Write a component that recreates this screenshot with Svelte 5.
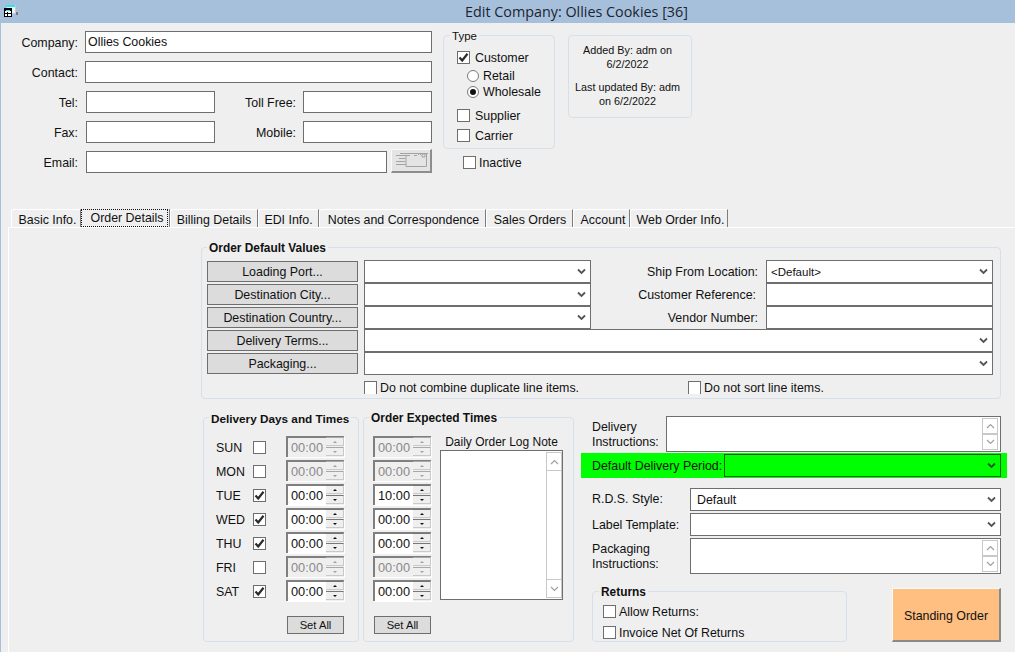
<script>
  const tabs = [
    ['Basic Info.', 70, 3], ['Order Details', 89, 0], ['Billing Details', 88, 0], ['EDI Info.', 61, 0],
    ['Notes and Correspondence', 167, 2], ['Sales Orders', 87, 1], ['Account', 57, 3], ['Web Order Info.', 98, 3]
  ];
  const days = [
    ['SUN', false, '00:00', false, '00:00', false],
    ['MON', false, '00:00', false, '00:00', false],
    ['TUE', true, '00:00', true, '10:00', true],
    ['WED', true, '00:00', true, '00:00', true],
    ['THU', true, '00:00', true, '00:00', true],
    ['FRI', false, '00:00', false, '00:00', false],
    ['SAT', true, '00:00', true, '00:00', true]
  ];
  const lookups = ['Loading Port...', 'Destination City...', 'Destination Country...', 'Delivery Terms...', 'Packaging...'];
</script>

{#snippet check(on)}
  <span class="check">
    {#if on}
      <svg width="11" height="11" viewBox="0 0 11 11"><path d="M1.5 5.5 L4.2 8.5 L9.5 1.8" fill="none" stroke="#2b2b2b" stroke-width="2.2"/></svg>
    {/if}
  </span>
{/snippet}

{#snippet chev()}
  <svg class="chev" width="9" height="7" viewBox="0 0 9 7"><path d="M1 1.5 L4.5 5 L8 1.5" fill="none" stroke="#555" stroke-width="1.8"/></svg>
{/snippet}

{#snippet spin(value, on)}
  <div class="spin" class:off={!on}>
    <span class="time">{value}</span>
    <div class="spin-btns">
      <span class="spin-btn"><i class="up"></i></span>
      <span class="spin-btn"><i class="down"></i></span>
    </div>
  </div>
{/snippet}

{#snippet memoBar()}
  <div class="memo-bar">
    <span class="memo-arrow"><svg width="9" height="6" viewBox="0 0 9 6"><path d="M1 5 L4.5 1.5 L8 5" fill="none" stroke="#a0a0a0" stroke-width="1.2"/></svg></span>
    <span class="memo-arrow"><svg width="9" height="6" viewBox="0 0 9 6"><path d="M1 1 L4.5 4.5 L8 1" fill="none" stroke="#a0a0a0" stroke-width="1.2"/></svg></span>
  </div>
{/snippet}

<div class="app">
  <header class="title">
    <svg class="win-icon" width="15" height="13" viewBox="0 0 15 13">
      <rect x="2.5" y="0.5" width="9" height="8" fill="#eaf2f6" stroke="#c3ced6" stroke-width="1"/>
      <rect x="2" y="0" width="9" height="2" fill="#2fe6ee"/>
      <rect x="12" y="7" width="2" height="3" fill="#7a7a7a"/>
      <rect x="0.5" y="3.5" width="7" height="8" fill="#fff" stroke="#000" stroke-width="1"/>
      <rect x="1" y="4" width="6" height="2" fill="#000"/>
      <rect x="2" y="5" width="4" height="1" fill="#2fe6ee"/>
      <path d="M1 8.5H7M3.5 7V11" stroke="#000" stroke-width="1"/>
    </svg>
    <span>Edit Company: Ollies Cookies [36]</span>
  </header>

  <div class="top">
    <div class="contact">
      <div class="row"><label class="l-main" for="co">Company:</label><input id="co" class="box co-in" value="Ollies Cookies" /></div>
      <div class="row"><span class="l-main">Contact:</span><div class="box co-in"></div></div>
      <div class="row"><span class="l-main l-short">Tel:</span><div class="box phone"></div><span class="l-second">Toll Free:</span><div class="box phone"></div></div>
      <div class="row"><span class="l-main l-short">Fax:</span><div class="box phone"></div><span class="l-second">Mobile:</span><div class="box phone"></div></div>
      <div class="row email-row"><span class="l-main l-short">Email:</span><div class="box email"></div>
        <div class="env-btn">
          <svg width="33" height="19" viewBox="0 0 33 19" fill="none" stroke="#a3a3a3" stroke-width="1">
            <path d="M5 2.5H33M31.5 2.5V15.5H11M11 5V15.5"/>
            <path d="M1 4.5H15M19 4.5H22M4 7.5H10M1 10.5H10M1 13.5H11"/>
            <path d="M25 3.5H26M27 3.5H28M29 3V6H32V3Z" transform="translate(-2 0)"/>
          </svg>
        </div>
      </div>
    </div>

    <div class="type-col">
      <fieldset class="group type">
        <legend>Type</legend>
        <div class="opt customer">{@render check(true)}<span>Customer</span></div>
        <div class="opt sub retail"><span class="radio"></span><span>Retail</span></div>
        <div class="opt sub wholesale"><span class="radio on"></span><span>Wholesale</span></div>
        <div class="opt supplier">{@render check(false)}<span>Supplier</span></div>
        <div class="opt carrier">{@render check(false)}<span>Carrier</span></div>
      </fieldset>
      <div class="opt inactive">{@render check(false)}<span>Inactive</span></div>
    </div>

    <div class="audit">
      <p>Added By: adm on<br />6/2/2022</p>
      <p>Last updated By: adm<br />on 6/2/2022</p>
    </div>
  </div>

  <nav class="tabs">
    {#each tabs as [name, w, pad], i}
      <div class="tab" class:active={i === 1} style="width:{w}px;padding-left:{pad}px"><span>{name}</span></div>
    {/each}
  </nav>

  <section class="panel">
    <fieldset class="group bold defaults">
      <legend>Order Default Values</legend>
      <div class="def-grid">
        {#each lookups as b, i}
          <div class="look" style="grid-row:{i + 1}"><span>{b}</span></div>
        {/each}
        <div class="box sel r1">{@render chev()}</div>
        <div class="box sel r2">{@render chev()}</div>
        <div class="box sel r3">{@render chev()}</div>
        <span class="def-label r1c">Ship From Location:</span>
        <span class="def-label r2c">Customer Reference:</span>
        <span class="def-label r3c">Vendor Number:</span>
        <div class="box sel r1d"><span>&lt;Default&gt;</span>{@render chev()}</div>
        <div class="box r2d"></div>
        <div class="box r3d"></div>
        <div class="box sel r4w">{@render chev()}</div>
        <div class="box sel r5w">{@render chev()}</div>
      </div>
      <div class="def-checks">
        <div class="clip first">{@render check(false)}<span>Do not combine duplicate line items.</span></div>
        <div class="clip">{@render check(false)}<span>Do not sort line items.</span></div>
      </div>
    </fieldset>

    <div class="lower">
      <fieldset class="group bold days">
        <legend>Delivery Days and Times</legend>
        <div class="stack">
          {#each days as d}
            <div class="day">
              <span class="day-name">{d[0]}</span>
              {@render check(d[1])}
              {@render spin(d[2], d[3])}
            </div>
          {/each}
        </div>
        <div class="set-all days-set">Set All</div>
      </fieldset>

      <fieldset class="group bold expected">
        <legend>Order Expected Times</legend>
        <div class="exp-body">
          <div>
            <div class="stack">
              {#each days as d}
                {@render spin(d[4], d[5])}
              {/each}
            </div>
            <div class="set-all exp-set">Set All</div>
          </div>
          <div class="note">
            <span class="note-label">Daily Order Log Note</span>
            <div class="box note-box">
              <div class="note-bar">
                <span><svg width="9" height="6" viewBox="0 0 9 6"><path d="M1 5 L4.5 1.5 L8 5" fill="none" stroke="#a0a0a0" stroke-width="1.2"/></svg></span>
                <span class="note-track"></span>
                <span><svg width="9" height="6" viewBox="0 0 9 6"><path d="M1 1 L4.5 4.5 L8 1" fill="none" stroke="#a0a0a0" stroke-width="1.2"/></svg></span>
              </div>
            </div>
          </div>
        </div>
      </fieldset>

      <div class="side">
        <div class="s-row">
          <span class="s-label di">Delivery<br />Instructions:</span>
          <div class="box memo di-box">{@render memoBar()}</div>
        </div>
        <div class="green">
          <span class="g-label">Default Delivery Period:</span>
          <div class="box sel g-sel">{@render chev()}</div>
        </div>
        <div class="s-row rds">
          <span class="s-label wide">R.D.S. Style:</span>
          <div class="box sel wide-in"><span>Default</span>{@render chev()}</div>
        </div>
        <div class="s-row next">
          <span class="s-label wide">Label Template:</span>
          <div class="box sel wide-in">{@render chev()}</div>
        </div>
        <div class="s-row next">
          <span class="s-label wide">Packaging<br />Instructions:</span>
          <div class="box memo wide-in">{@render memoBar()}</div>
        </div>
        <div class="foot">
          <fieldset class="group bold returns">
            <legend>Returns</legend>
            <div class="opt ret1">{@render check(false)}<span>Allow Returns:</span></div>
            <div class="opt ret2">{@render check(false)}<span>Invoice Net Of Returns</span></div>
          </fieldset>
          <div class="standing">Standing Order</div>
        </div>
      </div>
    </div>
  </section>
</div>

<style>
  :global(body) { margin: 0; background: #efefef; overflow: hidden; }
  .app {
    width: 1015px; height: 652px; box-sizing: border-box; overflow: hidden;
    background: #efefef; border-left: 1px solid #a6c0dc;
    font: 12.4px/14px "Liberation Sans", Arial, sans-serif; color: #111;
  }
  .title {
    height: 23px; margin-left: -1px; background: #a6c0dc; display: flex; align-items: center;
    justify-content: center; padding-left: 138px; position: relative;
    font: 14.35px/23px "Open Sans", sans-serif; color: #1c2430;
  }
  .win-icon { position: absolute; left: 4px; top: 5px; }

  .box { box-sizing: border-box; background: #fff; border: 1px solid #6e6e6e; flex: none; }
  input.box { font: inherit; color: #111; padding: 0 2px 1px 2px; margin: 0; outline: none; border-radius: 0; }

  .top { height: 186px; box-sizing: border-box; padding-top: 6px; display: flex; align-items: flex-start; }
  .contact { width: 431px; padding-top: 2px; flex: none; }
  .row { display: flex; align-items: center; height: 22px; margin-bottom: 8px; }
  .l-main { width: 77px; text-align: right; flex: none; margin-right: 7px; padding-top: 2px; }
  .l-short { margin-right: 8px; }
  .l-second { width: 81px; text-align: right; margin-right: 7px; flex: none; padding-top: 2px; }
  .co-in { width: 347px; height: 22px; }
  .phone { width: 129px; height: 22px; }
  .email { width: 301px; height: 22px; }
  .email-row { height: 24px; align-items: flex-end; margin-top: -2px; }
  .email-row .l-main { padding-top: 0; margin-bottom: 3px; }
  .env-btn {
    width: 41px; height: 24px; margin-left: 4px; box-sizing: border-box; flex: none;
    background: #e4e4e4; border: 1px solid #fafafa; border-right: 2px solid #8d8d8d; border-bottom: 2px solid #8d8d8d;
    display: flex; align-items: center; justify-content: center;
  }
  .env-btn svg { display: block; }

  .group { margin: 0; padding: 0; min-width: 0; box-sizing: border-box; border: 1px solid #d6e0ea; border-radius: 4px; }
  .group legend { padding: 0 2px; line-height: 13px; height: 13px; white-space: nowrap; }
  .bold legend { font-weight: bold; font-size: 11.9px; line-height: 15px; }

  .check {
    width: 13px; height: 13px; box-sizing: border-box; flex: none; background: #fff;
    border: 1px solid #6e6e6e; display: inline-flex; align-items: center; justify-content: center;
  }
  .check svg { display: block; }
  .radio {
    width: 12px; height: 12px; box-sizing: border-box; flex: none; background: #fff; border-radius: 50%;
    border: 1px solid #7a7a7a; display: inline-flex; align-items: center; justify-content: center;
  }
  .radio.on::after { content: ""; width: 6px; height: 6px; border-radius: 50%; background: #111; }
  .opt { display: flex; align-items: center; gap: 5px; height: 13px; }

  .type-col { margin-left: 11px; width: 112px; flex: none; }
  .type { width: 112px; height: 120px; padding-left: 13px; }
  .type legend { margin-left: -7px; font-size: 11.5px; line-height: 15px; }
  .customer { margin-top: 9px; }
  .sub { padding-left: 10px; gap: 4px; }
  .retail { margin-top: 5px; }
  .wholesale { margin-top: 3px; }
  .supplier { margin-top: 11px; }
  .carrier { margin-top: 7px; }
  .inactive { margin: 7px 0 0 20px; gap: 3px; }

  .audit {
    margin: 6px 0 0 13px; width: 124px; height: 83px; box-sizing: border-box; flex: none;
    border: 1px solid #d6e0ea; border-radius: 4px; text-align: center; font-size: 10.8px; padding: 7px 5px 0 0;
    line-height: 14px;
  }
  .audit p { margin: 0 0 9px; }

  .tabs { display: flex; height: 18px; padding-left: 10px; }
  .tab {
    box-sizing: border-box; flex: none; height: 18px; border-top: 1px solid #fff; border-left: 1px solid #fff;
    border-right: 1px solid #7c7c7c; border-top-left-radius: 3px;
    display: flex; align-items: center; justify-content: center; padding-top: 2px; white-space: nowrap;
  }
  .tab.active { padding: 0; border: none; border-right: 1px solid #7c7c7c; justify-content: flex-start; }
  .tab.active span {
    outline: 1px dotted #111; outline-offset: -1px; width: 87px; height: 18px; line-height: 18px; text-align: center;
    display: block; padding-left: 5px; box-sizing: border-box;
  }

  .panel { margin-left: 7px; height: 425px; box-sizing: border-box; border-top: 1px solid #fff; border-left: 1px solid #fff; padding-top: 13px; }

  .defaults { margin-left: 192px; width: 800px; height: 158px; padding: 6px 0 0 5px; }
  .def-grid {
    display: grid; grid-template-columns: 157px 227px 175px 227px; grid-auto-rows: 23px;
  }
  .look {
    grid-column: 1; width: 151px; height: 21px; margin-top: 1px; box-sizing: border-box; background: #dcdcdc;
    border: 1px solid #6e6e6e; display: flex; align-items: center; justify-content: center;
  }
  .sel { display: flex; align-items: center; justify-content: space-between; padding: 0 4px 0 6px; position: relative; }
  .chev { margin-left: auto; flex: none; }
  .r1 { grid-area: 1 / 2; } .r2 { grid-area: 2 / 2; } .r3 { grid-area: 3 / 2; }
  .def-label { text-align: right; padding: 5px 8px 0 0; }
  .r1c { grid-area: 1 / 3; } .r2c { grid-area: 2 / 3; padding-right: 10px; } .r3c { grid-area: 3 / 3; }
  .r1d { grid-area: 1 / 4; padding-left: 4px; font-size: 11.5px; } .r2d { grid-area: 2 / 4; } .r3d { grid-area: 3 / 4; }
  .r4w { grid-area: 4 / 2 / 4 / 5; } .r5w { grid-area: 5 / 2 / 5 / 5; }

  .def-checks { display: flex; margin: 6px 0 0 157px; }
  .clip { display: flex; gap: 3px; height: 13px; overflow: hidden; align-items: flex-start; }
  .clip .check { border-bottom: none; }
  .clip span:last-child { line-height: 13px; padding-top: 1px; }
  .first { width: 324px; }

  .lower { display: flex; align-items: flex-start; }
  .days { margin: 12px 0 0 194px; width: 156px; height: 231px; padding: 12px 0 0 12px; flex: none; }
  .days legend { margin-left: -7px; padding: 0 2px; font-size: 11.75px; }
  .stack { display: flex; flex-direction: column; gap: 3px; }
  .day { display: flex; align-items: center; height: 21px; }
  .day-name { width: 37px; flex: none; margin-top: 2px; }
  .day .check { margin: 2px 20px 0 0; }
  .spin {
    width: 58px; height: 21px; box-sizing: border-box; flex: none; display: flex; background: #fff;
    border-top: 2px solid #7f7f7f; border-left: 2px solid #7f7f7f; box-shadow: 1px 1px 0 #fff;
  }
  .spin.off { background: #efefef; }
  .spin.off .time { color: #8a8a8a; }
  .time { width: 38px; padding-left: 3px; box-sizing: border-box; line-height: 19px; font-size: 12.8px; flex: none; }
  .spin-btns { display: flex; flex-direction: column; margin-top: -1px; width: 18px; background: #efefef; }
  .spin-btn {
    height: 9px; box-sizing: border-box; border-top: 1px solid #777; background: #efefef;
    border-right: 1px solid #c9c9c9; border-bottom: 1px solid #c9c9c9; margin-bottom: 1px;
    display: flex; align-items: center; justify-content: center;
  }
  .spin-btn i { width: 0; height: 0; border-left: 2px solid transparent; border-right: 2px solid transparent; }
  .spin-btn .up { border-bottom: 2px solid #111; }
  .spin-btn .down { border-top: 2px solid #111; }
  .off .spin-btn { border-top-color: #a8a8a8; }
  .off .spin-btn .up { border-bottom-color: #a0a0a0; }
  .off .spin-btn .down { border-top-color: #a0a0a0; }
  .set-all {
    width: 57px; height: 18px; box-sizing: border-box; margin-top: 15px; background: #dcdcdc; border: 1px solid #6e6e6e;
    text-align: center; line-height: 16px; font-size: 11.2px;
  }
  .days-set { margin-left: 71px; }
  .exp-set { margin-left: 1px; }

  .expected { margin: 12px 0 0 4px; width: 211px; height: 231px; padding: 12px 0 0 9px; flex: none; }
  .expected legend { margin-left: -4px; padding: 0 2px; }
  .exp-body { display: flex; gap: 9px; }
  .note { width: 123px; }
  .note-label { display: block; height: 14px; text-align: center; font-size: 12px; white-space: nowrap; margin-top: -1px; margin-bottom: 1px; }
  .note-box { width: 123px; height: 150px; padding: 1px 1px 1px 105px; }
  .note-bar { width: 16px; height: 146px; display: flex; flex-direction: column; border: 1px solid #c8c8c8; box-sizing: border-box; }
  .note-bar span { height: 17px; display: flex; align-items: center; justify-content: center; flex: none; }
  .note-bar span.note-track { flex: 1; border-top: 1px solid #c8c8c8; border-bottom: 1px solid #c8c8c8; }

  .side { margin: 17px 0 0 7px; width: 426px; flex: none; }
  .s-row { display: flex; padding-left: 11px; align-items: center; }
  .s-label { display: block; flex: none; line-height: 15px; }
  .di { width: 74px; padding-top: 2px; }
  .wide { width: 98px; }
  .next .s-label { padding-top: 2px; }
  .memo { position: relative; height: 36px; }
  .di-box { width: 335px; }
  .wide-in { width: 311px; height: 23px; }
  .memo.wide-in { height: 36px; }
  .memo-bar { position: absolute; right: 2px; top: 1px; display: flex; flex-direction: column; }
  .memo-arrow {
    width: 16px; height: 16px; box-sizing: border-box; border: 1px solid #c8c8c8;
    display: flex; align-items: center; justify-content: center;
  }
  .green { margin-top: 1px; height: 25px; background: #00ff00; display: flex; align-items: center; padding-left: 11px; }
  .g-label { width: 132px; flex: none; white-space: nowrap; }
  .g-sel { width: 277px; height: 23px; background: #00ff00; border-color: #0b5b0b; }
  .g-sel .chev path { stroke: #1c561c; }
  .rds { margin-top: 10px; }
  .next { margin-top: 2px; }
  .foot { display: flex; align-items: flex-start; padding-left: 11px; margin-top: 11px; }
  .returns { width: 255px; height: 57px; padding: 7px 0 0 10px; flex: none; }
  .returns legend { margin-left: -4px; padding: 0 2px; }
  .ret1 { gap: 3px; }
  .ret2 { gap: 3px; margin-top: 8px; }
  .standing {
    width: 109px; height: 54px; margin: 3px 0 0 45px; box-sizing: border-box; flex: none; background: #ffbf80;
    border-top: 1px solid #f8f8f8; border-left: 1px solid #f8f8f8; border-right: 2px solid #8a8a8a; border-bottom: 2px solid #8a8a8a;
    display: flex; align-items: center; justify-content: center; padding-top: 2px;
  }
</style>
